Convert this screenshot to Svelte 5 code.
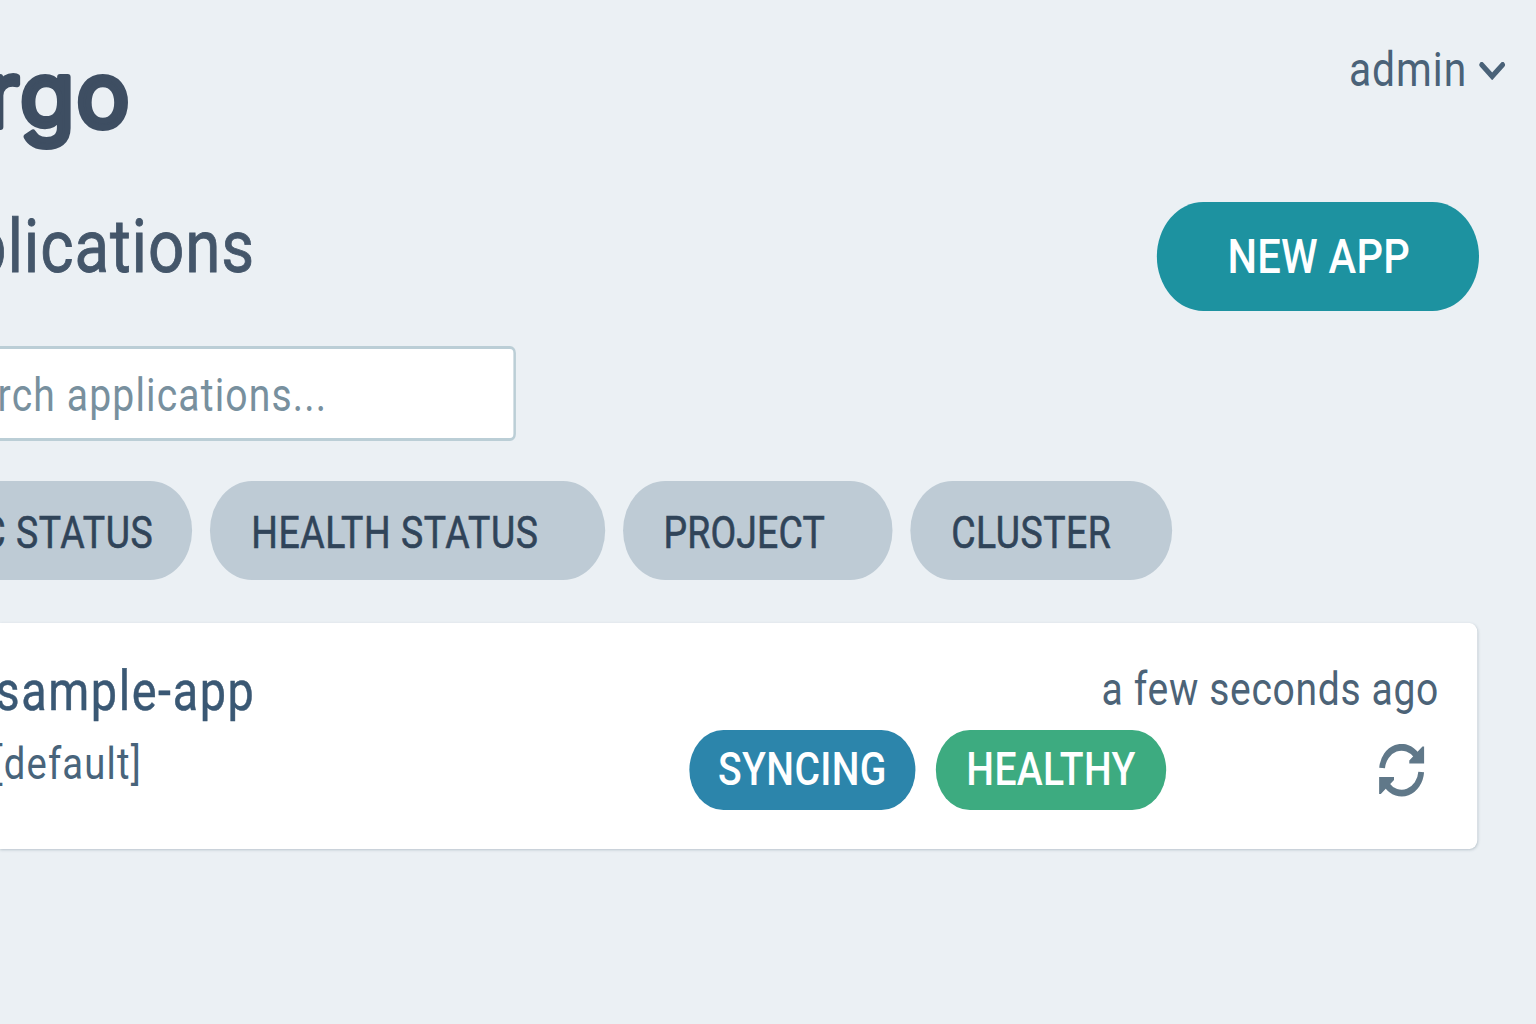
<script>
  const filters = [
    { label: 'C STATUS', kind: 'sync' },
    { label: 'HEALTH STATUS', kind: 'health' },
    { label: 'PROJECT', kind: 'project' },
    { label: 'CLUSTER', kind: 'cluster' }
  ];
</script>

<div class="viewport">
  <main class="page">
    <header class="topbar">
      <svg class="brand" viewBox="0 0 160 130">
        <text transform="scale(1.15 1)" x="2.5 48.3 105.4" y="86.5">rgo</text>
      </svg>
      <button class="user">
        <span>admin</span>
        <svg class="chevron" viewBox="0 0 31 18" aria-hidden="true">
          <path d="M3.2 2.8 15.5 14.4 27.8 2.8" />
        </svg>
      </button>
    </header>

    <section class="heading">
      <h1>plications</h1>
      <button class="new-app">NEW APP</button>
    </section>

    <div class="search"><span>rch applications...</span></div>

    <nav class="filters">
      {#each filters as filter}
        <button class="chip {filter.kind}"><span>{filter.label}</span></button>
      {/each}
    </nav>

    <article class="card">
      <div class="row names">
        <h2>sample-app</h2>
        <time>a few seconds ago</time>
      </div>
      <div class="row state">
        <p>[default]</p>
        <div class="badges">
          <span class="badge syncing">SYNCING</span>
          <span class="badge healthy">HEALTHY</span>
        </div>
        <svg class="refresh" viewBox="0 0 54 53" aria-hidden="true">
          <path class="arc" d="M4 24 A23 23 0 0 1 44.5 11.5 M50 28 A23 23 0 0 1 9.5 41" />
          <path class="head" d="M53.5 2.5V19.5H36V16.5L51.5 2.5Z M.5 33H18V36L2.5 50H.5Z" />
        </svg>
      </div>
    </article>
  </main>
</div>

<style>
  :global(body) {
    margin: 0;
    background: #ebf0f4;
  }

  .viewport {
    width: 1536px;
    height: 1024px;
    overflow: hidden;
    background: #ebf0f4;
  }

  /* Everything is set on a wider page and condensed horizontally. */
  .page {
    width: 1807px;
    height: 1024px;
    transform: scaleX(0.85);
    transform-origin: 0 0;
    font-family: Roboto, 'Liberation Sans', sans-serif;
    white-space: nowrap;
  }

  button {
    padding: 0;
    border: 0;
    background: none;
    color: inherit;
    font: inherit;
  }

  h1,
  h2,
  p {
    margin: 0;
    font-weight: 400;
  }

  .topbar {
    display: flex;
    justify-content: space-between;
    align-items: flex-start;
    height: 202px;
  }

  .brand {
    width: 160px;
    height: 130px;
    margin-top: 40px;
  }

  .brand text {
    fill: #3e4e62;
    stroke: #3e4e62;
    stroke-width: 6;
    stroke-linejoin: round;
    text-anchor: middle;
    font-family: Inter, Roboto, sans-serif;
    font-size: 91px;
    font-weight: 400;
  }

  .user {
    display: flex;
    align-items: center;
    gap: 14px;
    margin: 40px 36px 0 0;
    color: #4a6278;
    font-size: 48px;
    line-height: 60px;
    letter-spacing: 1.1px;
  }

  .chevron {
    width: 31px;
    height: 18px;
    margin-top: 2px;
    fill: none;
    stroke: #4a6278;
    stroke-width: 5.6;
    stroke-linecap: round;
  }

  .heading {
    display: flex;
    justify-content: space-between;
    height: 144px;
  }

  h1 {
    display: flex;
    justify-content: flex-end;
    width: 300px;
    color: #44566a;
    font-size: 75px;
    line-height: 88px;
    letter-spacing: 1px;
    -webkit-text-stroke: 0.9px #44566a;
  }

  .new-app {
    width: 379px;
    height: 109px;
    margin-right: 67px;
    border-radius: 55px;
    background: #1d92a0;
    color: #fff;
    font-size: 49px;
    font-weight: 500;
    line-height: 108px;
    letter-spacing: 0.3px;
    text-indent: 2px;
  }

  .search {
    display: flex;
    box-sizing: border-box;
    width: 607px;
    height: 95px;
    border: solid #bbced6;
    border-width: 3px 3px 3px 0;
    border-radius: 0 7px 7px 0;
    background: #fff;
    color: #78909e;
    font-size: 46px;
    line-height: 92px;
    letter-spacing: 1.35px;
  }

  .search span {
    display: flex;
    justify-content: flex-end;
    width: 385px;
  }

  .filters {
    display: flex;
    gap: 21px;
    margin-top: 40px;
  }

  .chip {
    display: flex;
    box-sizing: border-box;
    height: 99px;
    padding-left: 49px;
    border-radius: 50px;
    background: #becbd5;
    color: #304459;
    font-size: 44px;
    line-height: 104px;
    letter-spacing: 0.7px;
    -webkit-text-stroke: 0.6px #304459;
  }

  .sync {
    justify-content: flex-end;
    width: 225.5px;
    padding: 0 45px 0 0;
    border-radius: 0 50px 50px 0;
  }

  .health {
    width: 465px;
  }

  .project {
    width: 317.5px;
    padding-left: 48px;
    letter-spacing: 0.2px;
  }

  .cluster {
    width: 308px;
    padding-left: 48px;
    letter-spacing: 0.6px;
  }

  .card {
    box-sizing: border-box;
    width: 1738px;
    height: 226px;
    margin-top: 43px;
    padding-top: 34px;
    border-radius: 0 9px 9px 0;
    background: #fff;
    box-shadow: 0 1px 3px rgb(60 85 105 / 28%);
  }

  .row {
    display: flex;
    align-items: flex-start;
  }

  .names {
    justify-content: space-between;
    height: 73px;
  }

  h2 {
    display: flex;
    justify-content: flex-end;
    width: 300.5px;
    color: #3a5874;
    font-size: 55px;
    line-height: 68px;
    letter-spacing: 1.9px;
    -webkit-text-stroke: 0.5px #3a5874;
  }

  time {
    margin-right: 45px;
    color: #4c6377;
    font-size: 46px;
    line-height: 64px;
    letter-spacing: 0.75px;
  }

  p {
    display: flex;
    justify-content: flex-end;
    width: 167px;
    color: #48647b;
    font-size: 45px;
    line-height: 67px;
    letter-spacing: 1.35px;
  }

  .badges {
    display: flex;
    gap: 24px;
    margin-left: 644px;
  }

  .badge {
    height: 80px;
    border-radius: 40px;
    color: #fff;
    font-size: 46px;
    font-weight: 500;
    line-height: 79px;
    letter-spacing: 0.4px;
    text-align: center;
  }

  .syncing {
    width: 266px;
    background: #2c85ab;
  }

  .healthy {
    width: 271px;
    background: #3dab80;
  }

  .refresh {
    width: 54px;
    height: 53px;
    margin: 14px 0 0 250px;
  }

  .arc {
    fill: none;
    stroke: #607889;
    stroke-width: 6.8;
  }

  .head {
    fill: #607889;
  }
</style>
